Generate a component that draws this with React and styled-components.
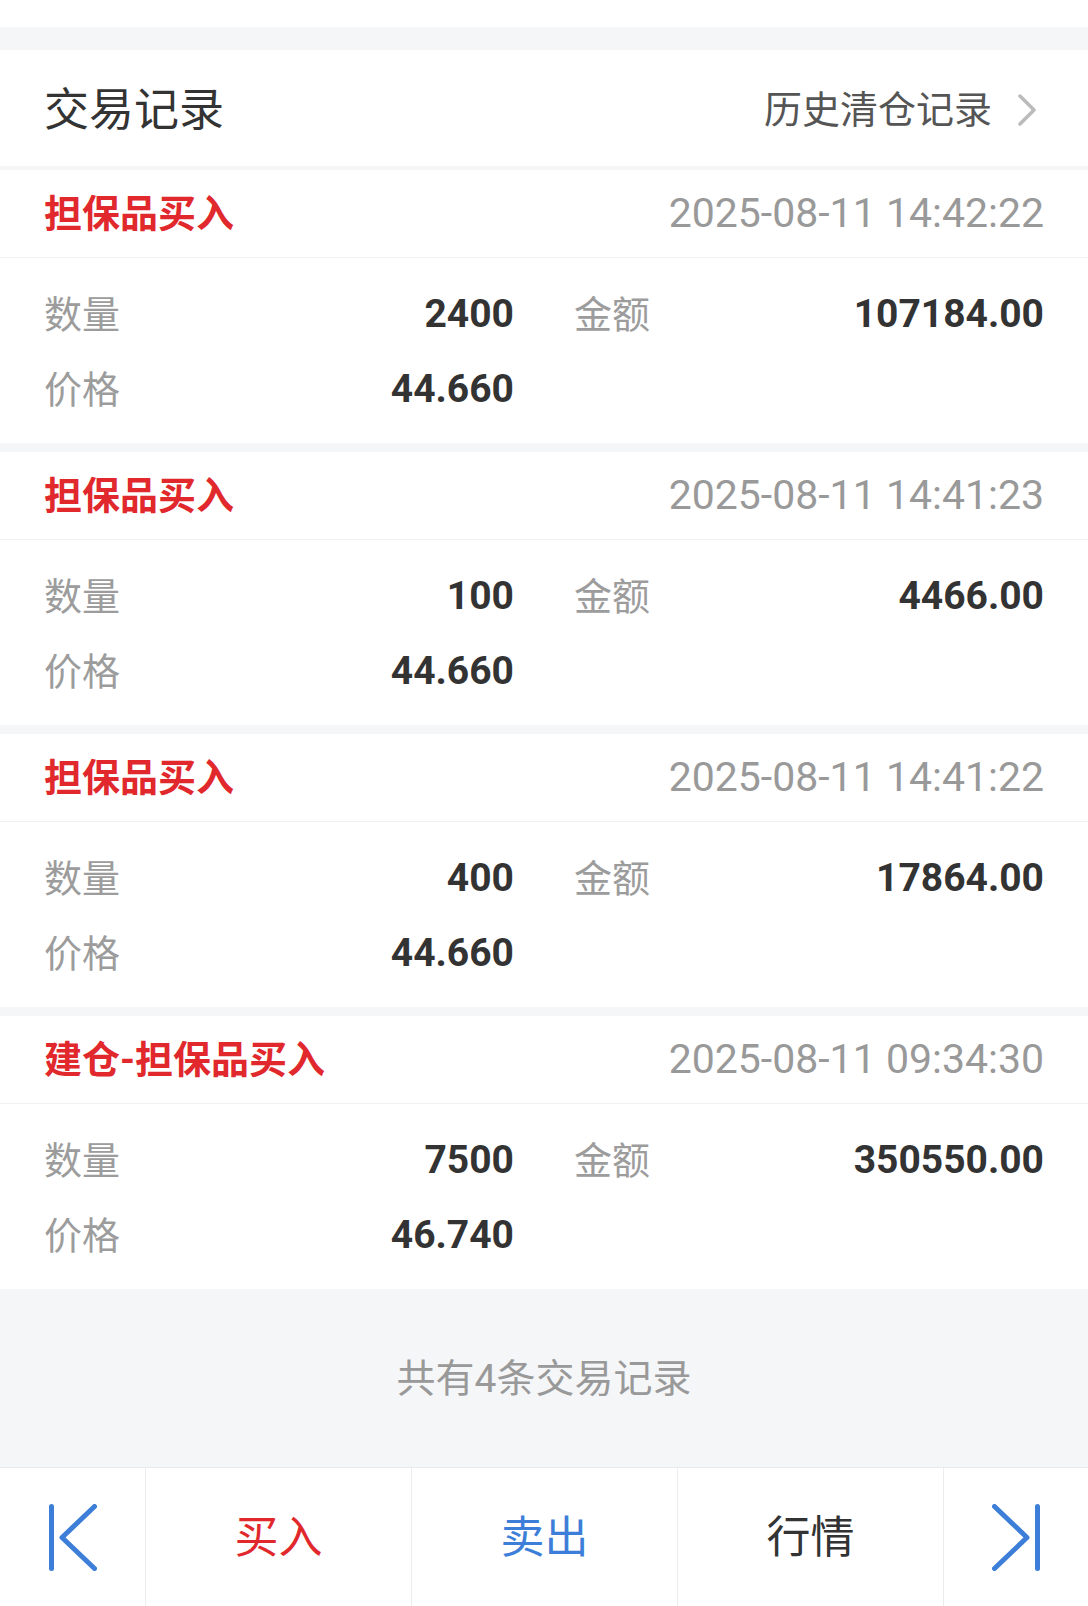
import React from "react";
import styled, { createGlobalStyle } from "styled-components";

const GlobalStyle = createGlobalStyle`
  html, body {
    margin: 0;
    padding: 0;
    background: #ffffff;
  }
  body {
    font-family: "Roboto", "Noto Sans CJK SC", sans-serif;
    -webkit-font-smoothing: antialiased;
  }
`;

const trades = [
  { id: 1, type: "担保品买入", time: "2025-08-11 14:42:22", qty: "2400", amount: "107184.00", price: "44.660" },
  { id: 2, type: "担保品买入", time: "2025-08-11 14:41:23", qty: "100", amount: "4466.00", price: "44.660" },
  { id: 3, type: "担保品买入", time: "2025-08-11 14:41:22", qty: "400", amount: "17864.00", price: "44.660" },
  { id: 4, type: "建仓-担保品买入", time: "2025-08-11 09:34:30", qty: "7500", amount: "350550.00", price: "46.740" },
];

const FirstIcon = () => (
  <svg width="48" height="67" viewBox="0 0 48 67" fill="none" stroke="#3d7fd8" strokeWidth="5" strokeLinecap="round" strokeLinejoin="round">
    <line x1="2.5" y1="2.5" x2="2.5" y2="64.5" />
    <polyline points="45.5,2.5 13,33.5 45.5,64.5" />
  </svg>
);

const LastIcon = () => (
  <svg width="48" height="67" viewBox="0 0 48 67" fill="none" stroke="#3d7fd8" strokeWidth="5" strokeLinecap="round" strokeLinejoin="round">
    <line x1="45.5" y1="2.5" x2="45.5" y2="64.5" />
    <polyline points="2.5,2.5 35,33.5 2.5,64.5" />
  </svg>
);

const Chevron = () => (
  <svg width="20" height="32" viewBox="0 0 20 32" fill="none" stroke="#bbbbbb" strokeWidth="3.5" strokeLinecap="round" strokeLinejoin="round">
    <polyline points="3,2 17,16 3,30" />
  </svg>
);

export default function App() {
  return (
    <Page>
      <GlobalStyle />
      <TopSpace />
      <Band />
      <Header>
        <Title>交易记录</Title>
        <HistoryLink>
          <span>历史清仓记录</span>
          <Chevron />
        </HistoryLink>
      </Header>
      <List>
        {trades.map((t) => (
          <Card key={t.id}>
            <CardHead>
              <TradeType>{t.type}</TradeType>
              <TradeTime>{t.time}</TradeTime>
            </CardHead>
            <CardBody>
              <Cell>
                <Label>数量</Label>
                <Value>{t.qty}</Value>
              </Cell>
              <Cell>
                <Label>金额</Label>
                <Value>{t.amount}</Value>
              </Cell>
              <Cell>
                <Label>价格</Label>
                <Value>{t.price}</Value>
              </Cell>
              <Cell />
            </CardBody>
          </Card>
        ))}
        <Footer>共有4条交易记录</Footer>
      </List>
      <BottomBar>
        <BarItem $first>
          <FirstIcon />
        </BarItem>
        <BarItem $color="#e0282d">买入</BarItem>
        <BarItem $color="#3d7fd8">卖出</BarItem>
        <BarItem $color="#333333">行情</BarItem>
        <BarItem>
          <LastIcon />
        </BarItem>
      </BottomBar>
    </Page>
  );
}

const Page = styled.div`
  width: 1088px;
  min-height: 1606px;
  display: flex;
  flex-direction: column;
  background: #ffffff;
`;

const TopSpace = styled.div`
  height: 27px;
  background: #ffffff;
`;

const Band = styled.div`
  height: 23px;
  background: #f5f6f8;
`;

const Header = styled.div`
  height: 116px;
  display: flex;
  align-items: center;
  justify-content: space-between;
  padding: 0 51px 0 44px;
  background: #ffffff;
`;

const Title = styled.div`
  font-size: 45px;
  color: #333333;
  line-height: 1;
  padding-top: 4px;
`;

const HistoryLink = styled.div`
  display: flex;
  align-items: center;
  gap: 25px;
  font-size: 38px;
  color: #555555;
  line-height: 1;
  padding-top: 3px;
`;

const List = styled.div`
  display: flex;
  flex-direction: column;
  gap: 9px;
  padding-top: 4px;
  background: #f5f6f8;
`;

const Card = styled.div`
  background: #ffffff;
`;

const CardHead = styled.div`
  height: 87px;
  display: flex;
  align-items: center;
  justify-content: space-between;
  padding: 0 44px 0 44px;
  border-bottom: 1px solid #f0f1f3;
`;

const TradeType = styled.div`
  font-size: 38px;
  font-weight: 700;
  color: #e0282d;
  line-height: 1;
`;

const TradeTime = styled.div`
  font-size: 41px;
  color: #999999;
  line-height: 1;
`;

const CardBody = styled.div`
  display: grid;
  grid-template-columns: 1fr 1fr;
  grid-auto-rows: 75px;
  column-gap: 60px;
  padding: 19px 44px 16px 44px;
`;

const Cell = styled.div`
  display: flex;
  align-items: center;
  justify-content: space-between;
`;

const Label = styled.span`
  font-size: 38px;
  color: #9c9c9c;
  line-height: 1;
`;

const Value = styled.span`
  font-size: 39px;
  font-weight: 700;
  color: #333333;
  line-height: 1;
`;

const Footer = styled.div`
  height: 178px;
  margin-top: -9px;
  padding-bottom: 6px;
  box-sizing: border-box;
  display: flex;
  align-items: center;
  justify-content: center;
  font-size: 39px;
  color: #999999;
`;

const BottomBar = styled.div`
  height: 138px;
  display: grid;
  grid-template-columns: 145px 1fr 1fr 1fr 145px;
  border-top: 1px solid #e8e9eb;
  background: #ffffff;
`;

const BarItem = styled.div`
  display: flex;
  align-items: center;
  justify-content: center;
  padding-bottom: ${({ $color }) => ($color ? "6px" : "0")};
  font-size: 44px;
  color: ${({ $color }) => $color || "#333333"};
  border-left: ${({ $first }) => ($first ? "none" : "1px solid #ececee")};
`;
